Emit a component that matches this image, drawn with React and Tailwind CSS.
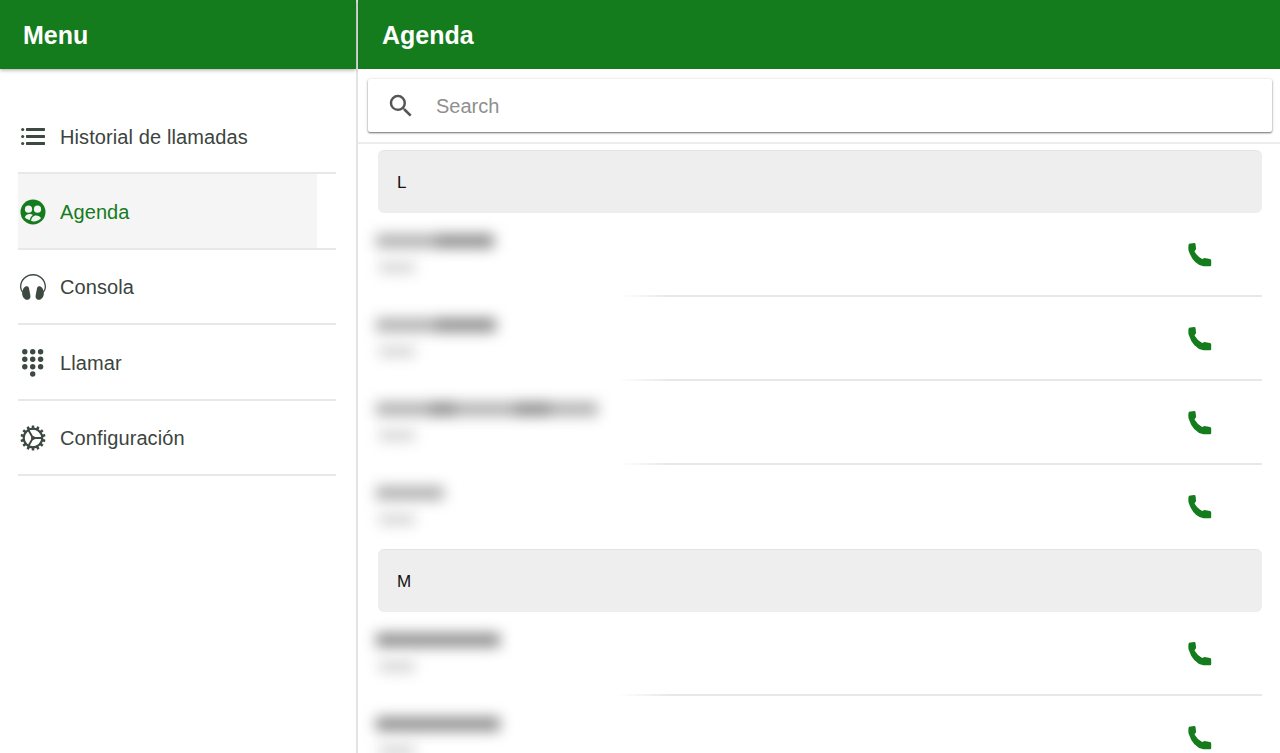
import React from 'react'
import { MdSearch } from 'react-icons/md'

const navColor = '#3c4a42'
const green = '#157c1e'

function ListIcon() {
  return (
    <svg width="26" height="26" viewBox="0 0 26 26" fill={navColor}>
      <circle cx="2.700" cy="5.500" r="1.600" />
      <circle cx="2.700" cy="12.500" r="1.600" />
      <circle cx="2.700" cy="19.500" r="1.600" />
      <rect x="6" y="4.100" width="19" height="2.800" rx="0.600" />
      <rect x="6" y="11.100" width="19" height="2.800" rx="0.600" />
      <rect x="6" y="18.100" width="19" height="2.800" rx="0.600" />
    </svg>
  )
}

function ContactsIcon() {
  return (
    <svg width="26" height="26" viewBox="0 0 26 26">
      <circle cx="13" cy="13" r="12.500" fill={green} />
      <circle cx="8.500" cy="10.200" r="3.600" fill="#f5f5f5" />
      <circle cx="17.500" cy="10.200" r="3.600" fill="#f5f5f5" />
      <path d="M4.800 18.300c1-2.200 2.800-3.300 5-3.300 1.200 0 2.200.3 3 .9-1.500 1-2.600 2.700-3 5.100-2.200-.5-3.800-1.400-5-2.700z" fill="#f5f5f5" />
      <path d="M11 21.800c.4-2.900 2.300-5.200 5-5.200 2.300 0 3.900 1 5 2.700-1.800 2-4.300 3.200-7.200 3.200-1 0-1.900-.2-2.800-.7z" fill="#f5f5f5" />
    </svg>
  )
}

function HeadphonesIcon() {
  return (
    <svg width="28" height="28" viewBox="0 0 28 28" fill={navColor}>
      <path d="M3.300 19.800C1.800 17.800 1 15.800 1 13.800 1 6.600 6.800 1 14 1s13 5.600 13 12.800c0 2-.8 4-2.300 6l-1-.7c1.300-1.800 2-3.500 2-5.300C25.700 7.400 20.500 2.500 14 2.500S2.300 7.400 2.300 13.800c0 1.800.7 3.500 2 5.300z" />
      <path d="M7 13.300c1.300-.4 2.400.2 2.900 1.500l1.500 8c.3 1.900-.7 3.700-2.400 4-2.300.4-4.300-1.300-5.300-3.600-1-2.300-.6-5.200.5-7.300.7-1.300 1.700-2.200 2.800-2.600z" />
      <path d="M21 13.300c-1.300-.4-2.400.2-2.900 1.500l-1.500 8c-.3 1.900.7 3.700 2.400 4 2.300.4 4.300-1.300 5.300-3.600 1-2.300.6-5.200-.5-7.300-.7-1.300-1.700-2.200-2.800-2.600z" />
    </svg>
  )
}

function DialpadIcon() {
  const dots = []
  for (let r = 0; r < 3; r++) {
    for (let c = 0; c < 3; c++) {
      dots.push(<circle key={`${r}-${c}`} cx={2.800 + c * 7.900} cy={3.800 + r * 7.500} r="2.700" />)
    }
  }
  return (
    <svg width="22" height="30" viewBox="0 0 22 30" fill={navColor}>
      {dots}
      <circle cx="10.700" cy="26" r="2.700" />
    </svg>
  )
}

function GearIcon() {
  const teeth = Array.from({ length: 14 }).map((_, i) => (
    <rect key={i} x="11.700" y="0.500" width="2.600" height="4" rx="0.400" transform={`rotate(${(i * 360) / 14} 13 13)`} />
  ))
  return (
    <svg width="26" height="26" viewBox="0 0 26 26" fill={navColor}>
      {teeth}
      <circle cx="13" cy="13" r="9.300" fill="none" stroke={navColor} strokeWidth="2.200" />
      <path d="M13 13H22M13 13 8.500 5.200M13 13 8.500 20.800" stroke={navColor} strokeWidth="1.900" fill="none" />
      <circle cx="13" cy="13" r="2" />
    </svg>
  )
}

function PhoneIcon() {
  return (
    <svg width="24" height="24" viewBox="0 0 24 24" fill={green}>
      <path d="M1 .8 6 .1Q7.500 0 7.600 1.500L8.100 6 6.500 8.600Q9 13.200 14.200 16L16.500 15 22 16Q23.200 16.300 23.200 17.500V22Q23.200 23.200 22 23.200L15.500 23.300Q5 21.500.5 7.200 0 2.500 1 .8Z" />
    </svg>
  )
}

const navItems = [
  { label: 'Historial de llamadas', icon: <ListIcon /> },
  { label: 'Agenda', icon: <ContactsIcon />, active: true },
  { label: 'Consola', icon: <HeadphonesIcon /> },
  { label: 'Llamar', icon: <DialpadIcon /> },
  { label: 'Configuración', icon: <GearIcon /> },
]

function NavItem({ label, icon, active }) {
  return (
    <div className="h-[75.4px] border-b-2 border-[#e8e8e8]">
      <div className={`h-full pt-[2px] flex items-center w-[299px] ${active ? 'bg-[#f5f5f5] text-[#157c1e]' : 'text-[#3c4440]'}`}>
        <div className="w-[30px] flex justify-center">{icon}</div>
        <span className="ml-[12px] text-[20px] tracking-[0.1px]">{label}</span>
      </div>
    </div>
  )
}

function SectionHeader({ letter }) {
  return (
    <div className="h-[63px] ml-[20px] mr-[18px] pl-[19px] pt-px flex items-center bg-[#eeeeee] rounded-[6px] border-t border-[#e4e4e4] text-[17px] text-[#111]">
      {letter}
    </div>
  )
}

// names in the source are censored, so they're just blurred bars
function ContactRow({ segments, last }) {
  return (
    <div className="relative h-[84px] ml-[20px] mr-[18px] flex justify-between">
      <div className="pt-[21px] -ml-[2px]">
        <div className="flex h-[14px] blur-[7px]">
          {segments.map(([w, dark], i) => (
            <div key={i} className={dark ? 'bg-[#8c8c8c]' : 'bg-[#b0b0b0]'} style={{ width: w }} />
          ))}
        </div>
        <div className="mt-[14px] ml-[3px] h-[11px] w-[36px] bg-[#d4d4d4] blur-[7px]" />
      </div>
      <div className="mr-[50px] mt-[30px]">
        <PhoneIcon />
      </div>
      {!last && (
        <div className="absolute bottom-0 right-0 left-[240px] h-[2px] bg-linear-to-r from-transparent via-[#e8e8e8] via-[8%] to-[#e8e8e8]" />
      )}
    </div>
  )
}

export default function App() {
  return (
    <div className="w-[1280px] h-[753px] overflow-hidden flex bg-white font-['Liberation_Sans',sans-serif]">
      <aside className="w-[358px] shrink-0 border-r-2 border-[#e4e4e4]">
        <div className="relative h-[69px] pl-[23px] pt-[2px] flex items-center bg-[#157c1e] text-white text-[25px] font-bold shadow-[0_1px_4px_rgba(0,0,0,0.35)]">
          Menu
        </div>
        <nav className="mt-[30px] ml-[18px] mr-[20px]">
          {navItems.map((item) => (
            <NavItem key={item.label} {...item} />
          ))}
        </nav>
      </aside>

      <main className="flex-1 min-w-0">
        <div className="h-[69px] pl-[24px] pt-[2px] flex items-center bg-[#157c1e] text-white text-[25px] font-bold">
          Agenda
        </div>
        <div className="h-[75px] pt-[10px] border-b-2 border-[#ececec]">
          <div className="h-[53px] ml-[10px] mr-[8px] pt-px flex items-center bg-white rounded-[2px] shadow-[0_1px_2px_rgba(0,0,0,0.55),0_0_4px_rgba(0,0,0,0.08)]">
            <MdSearch className="ml-[18px] w-[30px] h-[30px] text-[#555]" />
            <span className="ml-[20px] text-[20px] text-[#8f8f8f]">Search</span>
          </div>
        </div>
        <div className="pt-[6px]">
          <SectionHeader letter="L" />
          <ContactRow segments={[[60, false], [58, true]]} />
          <ContactRow segments={[[60, false], [60, true]]} />
          <ContactRow segments={[[54, false], [25, true], [60, false], [35, true], [48, false]]} />
          <ContactRow segments={[[68, false]]} last />
          <SectionHeader letter="M" />
          <ContactRow segments={[[124, true]]} />
          <ContactRow segments={[[124, true]]} />
        </div>
      </main>
    </div>
  )
}
